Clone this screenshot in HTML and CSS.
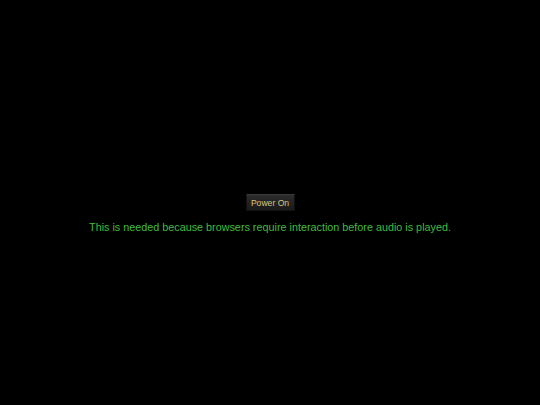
FILE: index.html
```html
<!DOCTYPE html>
<html>
<head>
<meta charset="utf-8">
<link rel="stylesheet" href="styles.css">
</head>
<body>
<main class="screen">
  <button class="power">Power On</button>
  <p class="note">This is needed because browsers require interaction before audio is played.</p>
</main>
</body>
</html>
```
FILE: styles.css
```css
html, body {
  margin: 0;
  padding: 0;
  background: #000;
  height: 100%;
}
.screen {
  display: flex;
  flex-direction: column;
  align-items: center;
  padding-top: 194px;
  font-family: "Liberation Sans", Arial, sans-serif;
}
.power {
  box-sizing: border-box;
  height: 17px;
  width: 49px;
  padding: 0;
  margin: 0;
  font-family: "Liberation Sans", Arial, sans-serif;
  font-size: 8.6px;
  color: #d8c57a;
  background: linear-gradient(#2c2c2c, #1a1a1a);
  border: 1px solid #111;
  border-top-color: #3a3a3a;
  border-radius: 1px;
}
.note {
  margin: 9px 0 0;
  font-size: 10.8px;
  line-height: 14px;
  color: #3fbd3f;
}
```
